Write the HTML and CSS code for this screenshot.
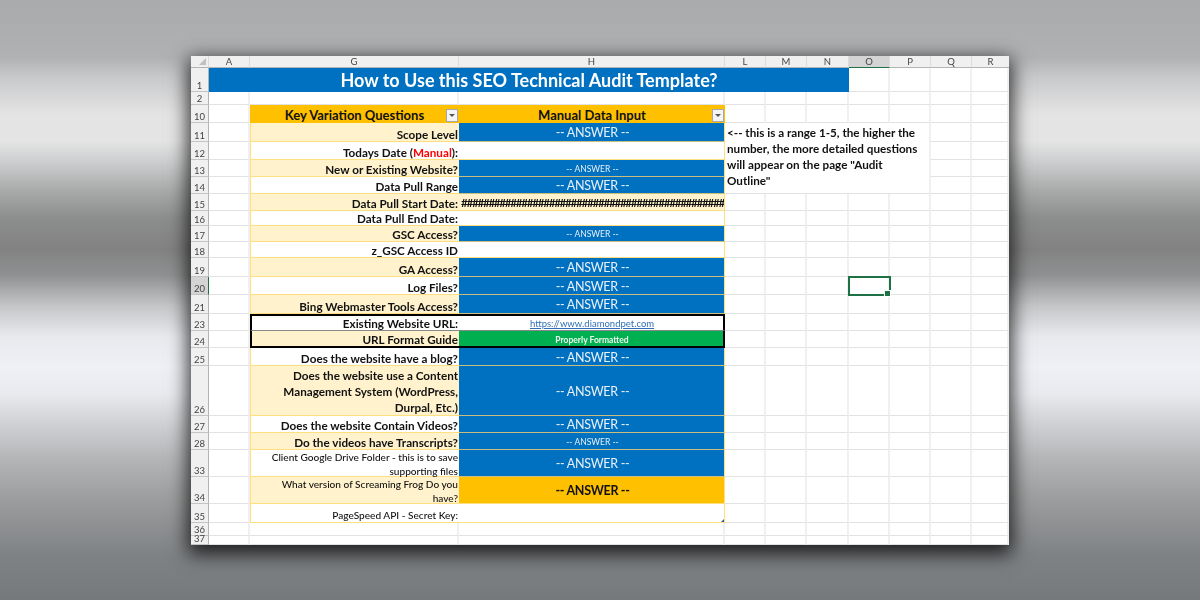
FILE: index.html
```html
<!DOCTYPE html>
<html lang="en">
<head>
  <meta charset="UTF-8">
  <title>How to Use this SEO Technical Audit Template?</title>
  <link rel="stylesheet" href="styles.css">
</head>
<body>
  <div class="sheet">
    <!-- column headers -->
    <div class="ch corner"></div>
    <div class="ch">A</div><div class="ch">G</div><div class="ch">H</div><div class="ch">L</div><div class="ch">M</div><div class="ch">N</div><div class="ch picked">O</div><div class="ch">P</div><div class="ch">Q</div><div class="ch last">R</div>

    <div class="rh">1</div>
    <div class="title">How to Use this SEO Technical Audit Template?</div>
    <div class="c"></div><div class="c"></div><div class="c"></div><div class="c"></div>

    <div class="rh">2</div>
    <div class="c"></div><div class="c"></div><div class="c"></div><div class="c"></div><div class="c"></div><div class="c"></div><div class="c"></div><div class="c"></div><div class="c"></div><div class="c"></div>

    <div class="rh">10</div>
    <div class="c"></div>
    <div class="top-h">Key Variation Questions<span class="filter"></span></div>
    <div class="top-h">Manual Data Input<span class="filter"></span></div>
    <div class="c"></div><div class="c"></div><div class="c"></div><div class="c"></div><div class="c"></div><div class="c"></div><div class="c"></div>

    <div class="rh">11</div>
    <div class="c"></div>
    <div class="q alt">Scope Level</div>
    <div class="a">-- ANSWER --</div>
    <div class="note">&lt;-- this is a range 1-5, the higher the number, the more detailed questions will appear on the page "Audit Outline"</div>
    <div class="c"></div><div class="c"></div>

    <div class="rh">12</div>
    <div class="c"></div>
    <div class="q">Todays Date (<span class="red">Manual</span>):</div>
    <div class="blank"></div>
    <div class="c"></div><div class="c"></div>

    <div class="rh">13</div>
    <div class="c"></div>
    <div class="q alt">New or Existing Website?</div>
    <div class="a sm">-- ANSWER --</div>
    <div class="c"></div><div class="c"></div>

    <div class="rh">14</div>
    <div class="c"></div>
    <div class="q">Data Pull Range</div>
    <div class="a">-- ANSWER --</div>
    <div class="c"></div><div class="c"></div>

    <div class="rh">15</div>
    <div class="c"></div>
    <div class="q alt">Data Pull Start Date:</div>
    <div class="hashes">################################################</div>
    <div class="c"></div><div class="c"></div><div class="c"></div><div class="c"></div><div class="c"></div><div class="c"></div><div class="c"></div>

    <div class="rh">16</div>
    <div class="c"></div>
    <div class="q">Data Pull End Date:</div>
    <div class="blank"></div>
    <div class="c"></div><div class="c"></div><div class="c"></div><div class="c"></div><div class="c"></div><div class="c"></div><div class="c"></div>

    <div class="rh">17</div>
    <div class="c"></div>
    <div class="q alt">GSC Access?</div>
    <div class="a sm">-- ANSWER --</div>
    <div class="c"></div><div class="c"></div><div class="c"></div><div class="c"></div><div class="c"></div><div class="c"></div><div class="c"></div>

    <div class="rh">18</div>
    <div class="c"></div>
    <div class="q">z_GSC Access ID</div>
    <div class="blank"></div>
    <div class="c"></div><div class="c"></div><div class="c"></div><div class="c"></div><div class="c"></div><div class="c"></div><div class="c"></div>

    <div class="rh">19</div>
    <div class="c"></div>
    <div class="q alt">GA Access?</div>
    <div class="a">-- ANSWER --</div>
    <div class="c"></div><div class="c"></div><div class="c"></div><div class="c"></div><div class="c"></div><div class="c"></div><div class="c"></div>

    <div class="rh picked-row">20</div>
    <div class="c"></div>
    <div class="q">Log Files?</div>
    <div class="a">-- ANSWER --</div>
    <div class="c"></div><div class="c"></div><div class="c"></div><div class="c selected"></div><div class="c"></div><div class="c"></div><div class="c"></div>

    <div class="rh">21</div>
    <div class="c"></div>
    <div class="q alt">Bing Webmaster Tools Access?</div>
    <div class="a">-- ANSWER --</div>
    <div class="c"></div><div class="c"></div><div class="c"></div><div class="c"></div><div class="c"></div><div class="c"></div><div class="c"></div>

    <div class="rh">23</div>
    <div class="c"></div>
    <div class="q box-top box-left">Existing Website URL:</div>
    <div class="url box-top box-right"><a href="#">https://www.diamondpet.com</a></div>
    <div class="c"></div><div class="c"></div><div class="c"></div><div class="c"></div><div class="c"></div><div class="c"></div><div class="c"></div>

    <div class="rh">24</div>
    <div class="c"></div>
    <div class="q alt box-bottom box-left">URL Format Guide</div>
    <div class="ok box-bottom box-right">Properly Formatted</div>
    <div class="c"></div><div class="c"></div><div class="c"></div><div class="c"></div><div class="c"></div><div class="c"></div><div class="c"></div>

    <div class="rh">25</div>
    <div class="c"></div>
    <div class="q">Does the website have a blog?</div>
    <div class="a">-- ANSWER --</div>
    <div class="c"></div><div class="c"></div><div class="c"></div><div class="c"></div><div class="c"></div><div class="c"></div><div class="c"></div>

    <div class="rh">26</div>
    <div class="c"></div>
    <div class="q alt multi">Does the website use a Content<br>Management System (WordPress,<br>Durpal, Etc.)</div>
    <div class="a">-- ANSWER --</div>
    <div class="c"></div><div class="c"></div><div class="c"></div><div class="c"></div><div class="c"></div><div class="c"></div><div class="c"></div>

    <div class="rh">27</div>
    <div class="c"></div>
    <div class="q">Does the website Contain Videos?</div>
    <div class="a">-- ANSWER --</div>
    <div class="c"></div><div class="c"></div><div class="c"></div><div class="c"></div><div class="c"></div><div class="c"></div><div class="c"></div>

    <div class="rh">28</div>
    <div class="c"></div>
    <div class="q alt">Do the videos have Transcripts?</div>
    <div class="a sm">-- ANSWER --</div>
    <div class="c"></div><div class="c"></div><div class="c"></div><div class="c"></div><div class="c"></div><div class="c"></div><div class="c"></div>

    <div class="rh">33</div>
    <div class="c"></div>
    <div class="q thin">Client Google Drive Folder - this is to save<br>supporting files</div>
    <div class="a">-- ANSWER --</div>
    <div class="c"></div><div class="c"></div><div class="c"></div><div class="c"></div><div class="c"></div><div class="c"></div><div class="c"></div>

    <div class="rh">34</div>
    <div class="c"></div>
    <div class="q alt thin">What version of Screaming Frog Do you<br>have?</div>
    <div class="a gold">-- ANSWER --</div>
    <div class="c"></div><div class="c"></div><div class="c"></div><div class="c"></div><div class="c"></div><div class="c"></div><div class="c"></div>

    <div class="rh">35</div>
    <div class="c"></div>
    <div class="q thin">PageSpeed API - Secret Key:</div>
    <div class="blank handle"></div>
    <div class="c"></div><div class="c"></div><div class="c"></div><div class="c"></div><div class="c"></div><div class="c"></div><div class="c"></div>

    <div class="rh">36</div>
    <div class="c"></div><div class="c"></div><div class="c"></div><div class="c"></div><div class="c"></div><div class="c"></div><div class="c"></div><div class="c"></div><div class="c"></div><div class="c"></div>

    <div class="rh">37</div>
    <div class="c"></div><div class="c"></div><div class="c"></div><div class="c"></div><div class="c"></div><div class="c"></div><div class="c"></div><div class="c"></div><div class="c"></div><div class="c"></div>
  </div>
</body>
</html>
```

FILE: styles.css
```css
* {
  box-sizing: border-box;
}
body {
  margin: 0;
  height: 600px;
  padding-top: 56px;
  overflow: hidden;
  font-family: Lato, "Liberation Sans", sans-serif;
  color: #111;
  background: linear-gradient(180deg,
    #a9aaac 0, #b0b1b3 57px, #c8c9cb 77px, #e4e4e4 115px, #e4e4e4 141px,
    #cfd0d1 160px, #a8a9a9 191px, #8c8d8d 218px, #818281 249px, #8f9091 275px,
    #c4c6c8 306px, #e8eaee 337px, #eef0f5 367px, #e8eaee 394px, #d2d3d6 421px,
    #b4b5b7 459px, #9d9e9f 497px, #7f8285 555px, #76797c 600px);
}
.sheet {
  width: 818px;
  height: 489px;
  margin: 0 auto;
  background: #fff;
  overflow: hidden;
  box-shadow: 0 6px 18px 3px rgba(0, 0, 0, 0.8);
  filter: blur(0.35px);
  display: grid;
  grid-template-columns: 18px 41px 209px 266px 41px 41px 42px 41px 41px 41px 37px;
  grid-template-rows: 12px 24px 13px 18px 19px 18px 17px 17px 17px 15px 16px 16px 19px 18px 19px 17px 17px 18px 50px 17px 17px 27px 27px 19px 13px 9px;
}
.ch {
  background: #f0f0f0;
  border-right: 1px solid #dcdcdc;
  border-bottom: 1px solid #b4b4b4;
  font-size: 9.5px;
  line-height: 11px;
  text-align: center;
  color: #444;
}
.ch.last {
  border-right: 0;
}
.ch.picked {
  background: #d4d4d4;
  border-bottom: 1px solid #1e7145;
}
.corner {
  position: relative;
}
.corner::after {
  content: "";
  position: absolute;
  right: 2px;
  bottom: 2px;
  border-style: solid;
  border-width: 0 0 7px 7px;
  border-color: transparent transparent #c0c0c0 transparent;
}
.rh {
  background: #f0f0f0;
  border-right: 1px solid #b4b4b4;
  border-bottom: 1px solid #c4c4c4;
  display: flex;
  align-items: flex-end;
  justify-content: center;
  font-size: 9.5px;
  line-height: 11px;
  color: #444;
}
.rh.picked-row {
  background: #d4d4d4;
  border-right: 1px solid #1e7145;
}
.c {
  border-right: 2px solid #f0f0f0;
  border-bottom: 1px solid #e2e2e2;
}
.selected {
  position: relative;
  outline: 2px solid #1e7145;
  outline-offset: -1px;
}
.selected::after {
  content: "";
  position: absolute;
  right: -3px;
  bottom: -3px;
  width: 5px;
  height: 5px;
  background: #1e7145;
  border: 1px solid #fff;
}
.title {
  grid-column: span 6;
  background: #0070c0;
  color: #fff;
  font-size: 18px;
  font-weight: 700;
  display: flex;
  align-items: center;
  justify-content: center;
}
.top-h {
  position: relative;
  padding-top: 1px;
  background: #ffc000;
  font-size: 13px;
  font-weight: 700;
  display: flex;
  align-items: center;
  justify-content: center;
}
.filter {
  position: absolute;
  right: 1px;
  top: 4px;
  width: 12px;
  height: 13px;
  background: #f4f4f4;
  border: 1px solid #a8a8a8;
}
.filter::after {
  content: "";
  position: absolute;
  left: 2px;
  top: 4px;
  border-style: solid;
  border-width: 3px 3px 0 3px;
  border-color: #555 transparent transparent transparent;
}
.q {
  border-left: 1px solid #ffdf80;
  border-bottom: 1px solid #ffdf80;
  padding-right: 1px;
  font-size: 11.7px;
  font-weight: 700;
  line-height: 14px;
  text-align: right;
  white-space: nowrap;
  align-content: end;
}
.q.alt {
  background: #fff2cc;
}
.q.multi {
  padding-top: 1px;
  line-height: 16px;
  align-content: start;
}
.q.thin {
  font-size: 10.1px;
  line-height: 14px;
  font-weight: 500;
}
.red {
  color: #f00;
}
.a {
  padding: 1px 0 0 2px;
  background: #0070c0;
  color: #e8f0f8;
  border-right: 1px solid #ffdf80;
  border-bottom: 1px solid #c9bd80;
  font-size: 12.5px;
  letter-spacing: -0.3px;
  display: flex;
  align-items: center;
  justify-content: center;
}
.a.sm {
  font-size: 8.5px;
  letter-spacing: 0;
}
.a.gold {
  background: #ffc000;
  color: #111;
  font-weight: 700;
  border-bottom-color: #ffdf80;
}
.blank {
  position: relative;
  border-right: 1px solid #ffdf80;
  border-bottom: 1px solid #ffdf80;
}
.handle::after {
  content: "";
  position: absolute;
  right: 0;
  bottom: 0;
  border-style: solid;
  border-width: 0 0 3px 3px;
  border-color: transparent transparent #2f5c8f transparent;
}
.hashes {
  padding-left: 2px;
  background: #fff2cc;
  border-right: 1px solid #ffdf80;
  border-bottom: 1px solid #ffdf80;
  font-size: 11.7px;
  font-weight: 700;
  line-height: 16px;
  letter-spacing: -1.3px;
  white-space: nowrap;
  overflow: hidden;
}
.note {
  grid-column: span 5;
  grid-row: span 4;
  padding: 0 2px 4px 2px;
  border-right: 2px solid #f0f0f0;
  border-bottom: 1px solid #e2e2e2;
  font-size: 11.7px;
  font-weight: 700;
  line-height: 16px;
  display: flex;
  align-items: center;
}
.url {
  padding-left: 2px;
  font-size: 9.5px;
  display: flex;
  align-items: center;
  justify-content: center;
  border-bottom: 1px solid #888;
}
.url a {
  color: #2f6fb5;
}
.ok {
  padding: 2px 0 0 2px;
  background: #00b050;
  color: #eef8ee;
  font-size: 8.5px;
  font-weight: 700;
  display: flex;
  align-items: center;
  justify-content: center;
}
.q.box-top {
  border-bottom: 1px solid #888;
}
.box-top {
  border-top: 2px solid #000;
}
.box-bottom,
.q.box-bottom {
  border-bottom: 2px solid #000;
}
.box-left,
.q.box-left {
  border-left: 2px solid #000;
}
.box-right {
  border-right: 2px solid #000;
}
```
